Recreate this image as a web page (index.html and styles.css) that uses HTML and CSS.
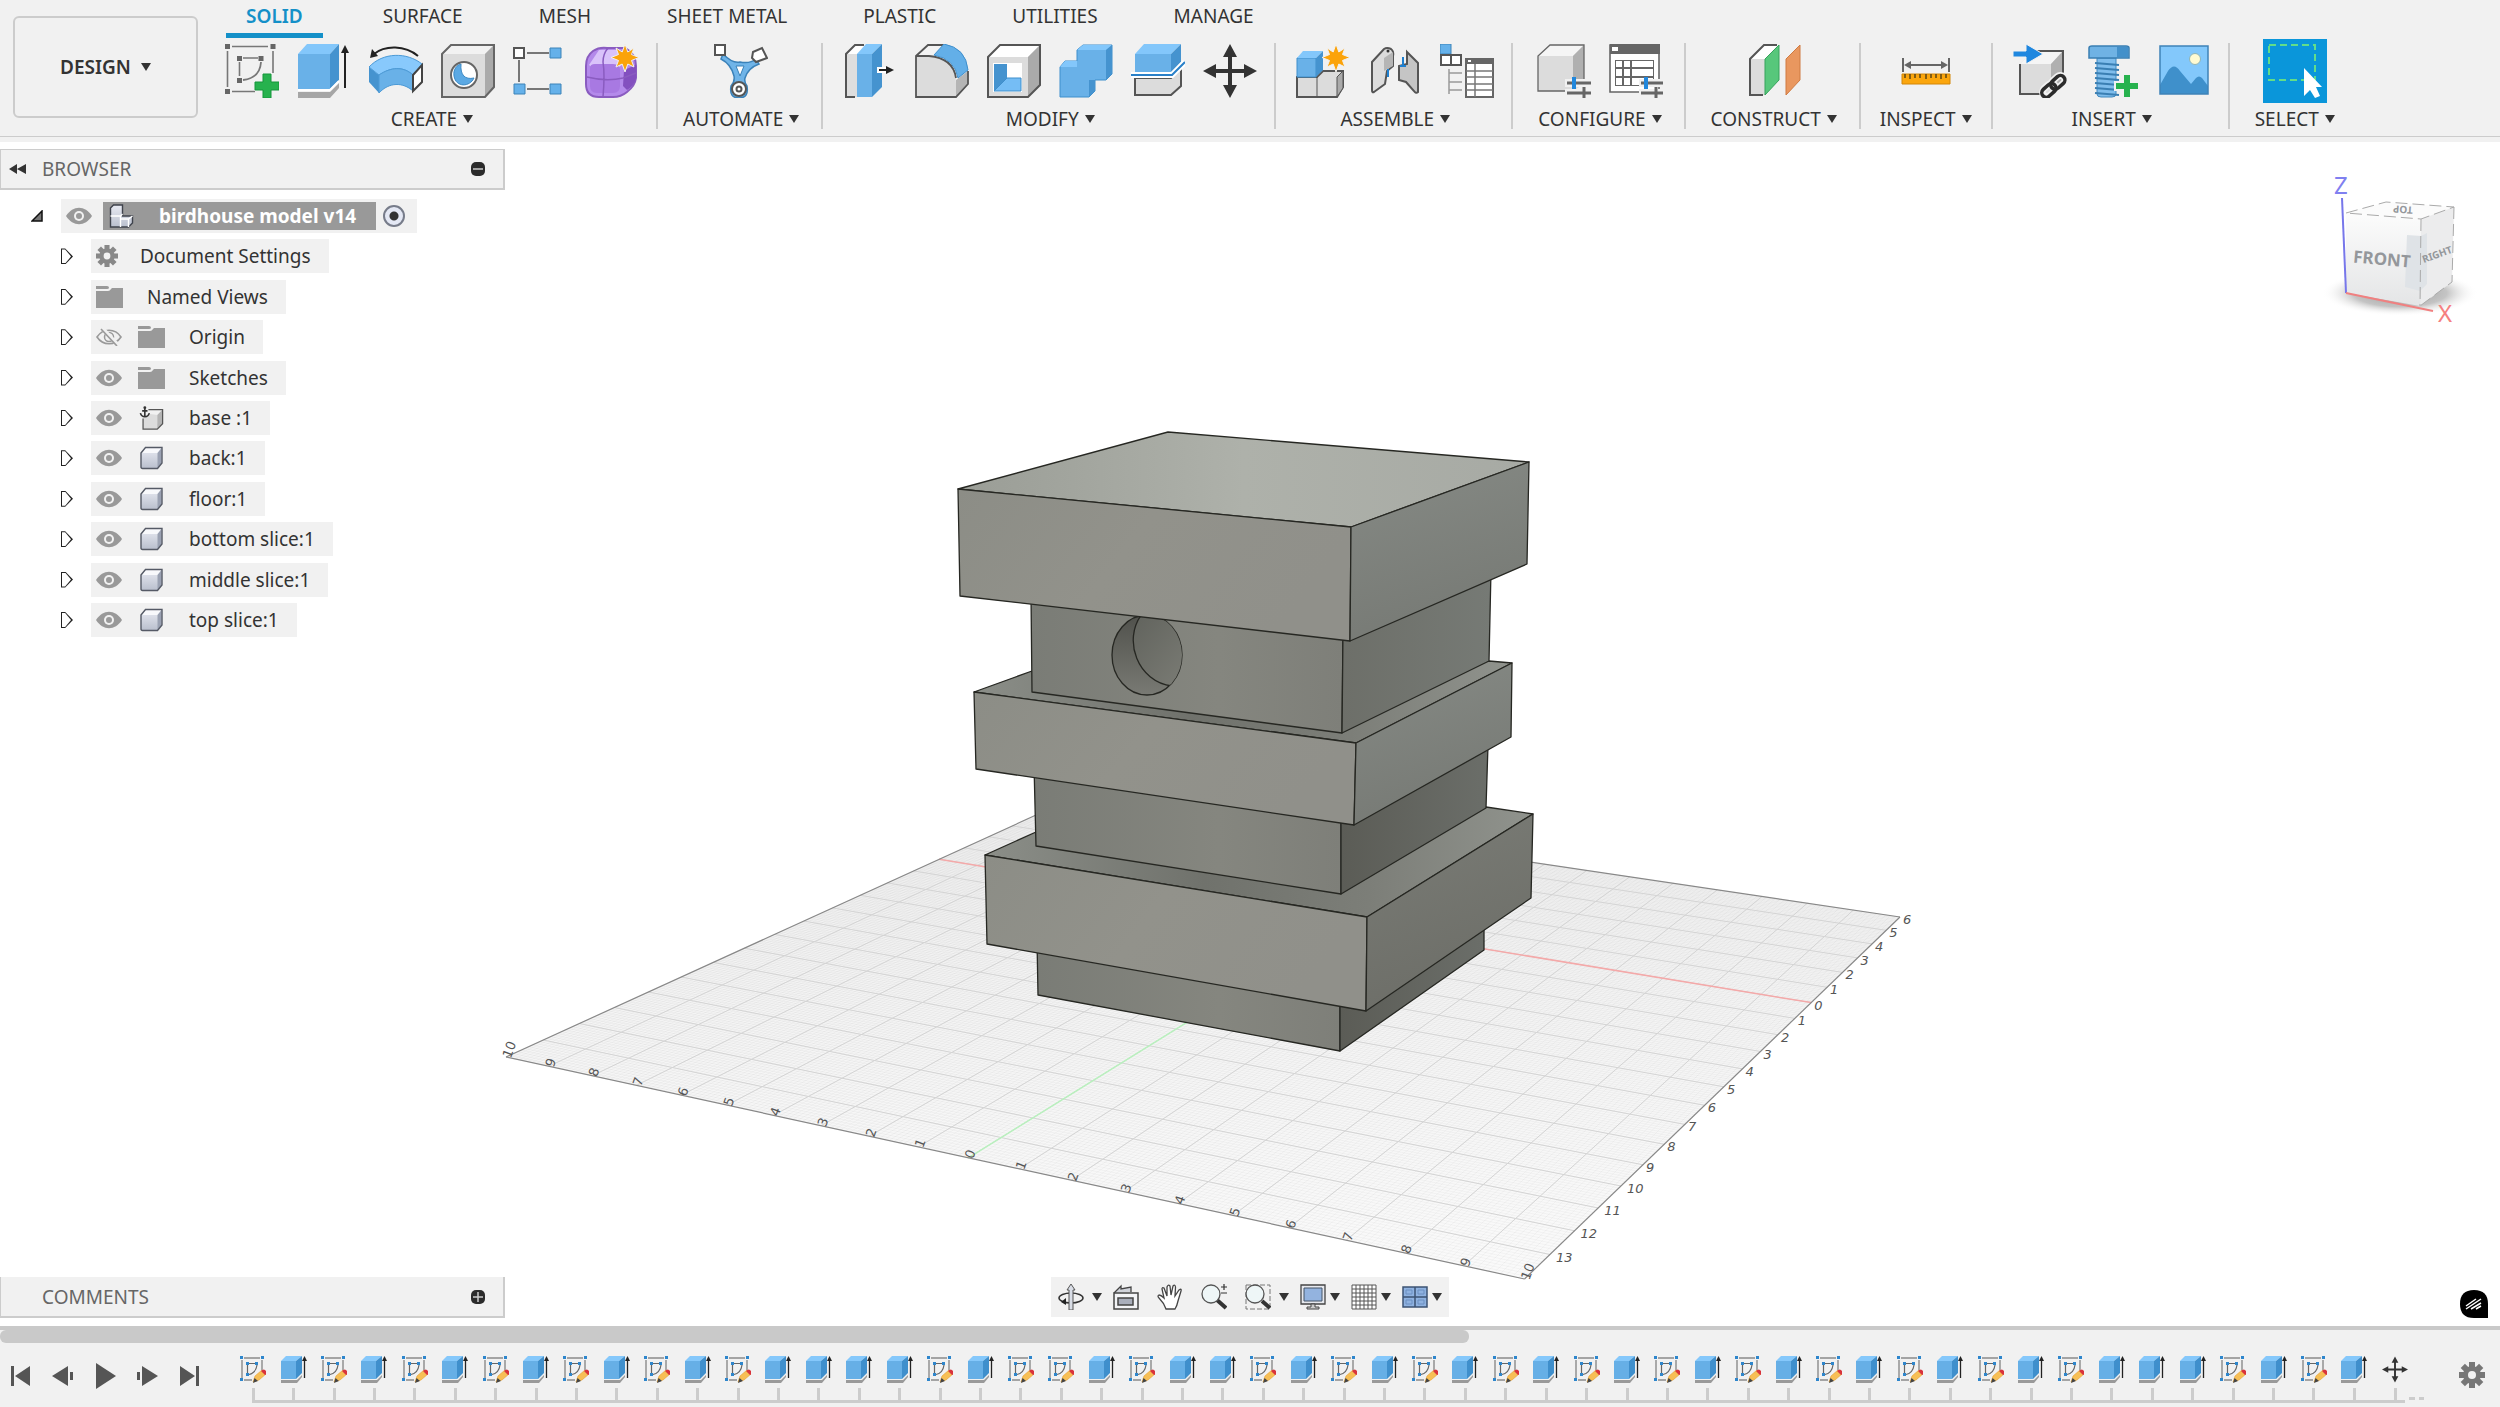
FILE: index.html
```html
<!DOCTYPE html>
<html lang="en">

<head>
    <meta charset="UTF-8">
    <meta name="viewport" content="width=device-width, initial-scale=1.0">
    <link rel="stylesheet" href="styles.css">
    <title>birdhouse model v14</title>
</head>

<body>

    <!-- shared icons -->
    <svg class="sprite" aria-hidden="true">
        <defs>
            <linearGradient id="bodyFill" x1="0" y1="0" x2="0" y2="1">
                <stop offset="0" stop-color="#e9ebf3" />
                <stop offset="1" stop-color="#b9bfcd" />
            </linearGradient>
        </defs>
        <symbol id="eye" viewBox="0 0 26 18">
            <path d="M0 9C7-2 19-2 26 9C19 20 7 20 0 9z" fill="#999" />
            <circle cx="13" cy="9" r="5" fill="#f1f1f1" />
            <circle cx="13" cy="9" r="3" fill="#999" />
        </symbol>
        <symbol id="eyeOff" viewBox="0 0 26 18">
            <path d="M1 9C7 0 19 0 25 9C19 18 7 18 1 9z" fill="none" stroke="#999" stroke-width="1.6" />
            <circle cx="13" cy="9" r="4.5" fill="none" stroke="#999" stroke-width="1.5" />
            <path d="M6 0L22 17" stroke="#f1f1f1" stroke-width="4" />
            <path d="M5 1L21 18" stroke="#999" stroke-width="1.6" />
        </symbol>
        <symbol id="folder" viewBox="0 0 27 22">
            <path d="M0 0h11q2 0 2 1.500t-2 1.500H0z" fill="#999" />
            <path d="M0 5h12q2 0 3-2l1-1h11v20H0z" fill="#999" />
        </symbol>
        <symbol id="gear" viewBox="0 0 26 26">
            <g fill="currentColor">
                <rect x="10" y="0" width="6" height="26" />
                <rect x="10" y="0" width="6" height="26" transform="rotate(45 13 13)" />
                <rect x="10" y="0" width="6" height="26" transform="rotate(90 13 13)" />
                <rect x="10" y="0" width="6" height="26" transform="rotate(135 13 13)" />
                <circle cx="13" cy="13" r="9" />
            </g>
            <circle cx="13" cy="13" r="4" fill="#f1f1f1" />
        </symbol>
        <symbol id="body" viewBox="0 0 24 24">
            <path d="M1.500 7L6 1.500H22.500V17L18 22.500H3Q1.500 22.500 1.500 21z" fill="url(#bodyFill)" />
            <path d="M2 7L6 2H22L18 7z" fill="#f8f9fc" />
            <path d="M18 7L22 2V17L18 22z" fill="#9aa1b2" />
            <path d="M1.500 7L6 1.500H22.500V17L18 22.500H3Q1.500 22.500 1.500 21z" fill="none" stroke="#555a66" stroke-width="1.400" />
        </symbol>
        <symbol id="anchored" viewBox="0 0 27 27">
            <path d="M4 14V26H20V10L12 9z" fill="#dcdcdc" />
            <path d="M20 10L26 4V20L20 26z" fill="#b4b4b4" />
            <path d="M10 4H26V20L20 26H4V14" fill="none" stroke="#555" stroke-width="1.400" />
            <path d="M6 3V12M3 5.500H9M1 8Q2 12 6 12Q10 12 11 8" fill="none" stroke="#333" stroke-width="1.800" />
            <circle cx="6" cy="2" r="1.600" fill="#333" />
        </symbol>
        <symbol id="component" viewBox="0 0 24 24">
            <path d="M1 4L4 1H13V12H23V19L19 23H1z" fill="url(#bodyFill)" stroke="#3f434c" stroke-width="1.400" />
            <path d="M1 12H11M11 23V12L13 10M19 23V15H11M19 15L23 12" fill="none" stroke="#fff" stroke-width="1.400" />
        </symbol>
        <symbol id="sketchStep" viewBox="0 0 26 27">
            <path d="M2 4V22M4 2H20M22 4V14M4 24H12" stroke="#8b8b8b" stroke-width="1.400" fill="none" />
            <path d="M7.500 9V17M9 7.500H15M17 9Q16 17 9 18.500" stroke="#666" stroke-width="1.200" fill="none" />
            <path d="M0 0h3v3h-3zM21 0h3v3h-3zM0 22h3v3h-3zM6 6h3v3h-3zM15 6h3v3h-3zM6 17h3v3h-3z" fill="#2e86cc" />
            <path d="M13 26L15 20L22 14L26 18L19 24z" fill="#f7bf55" stroke="#e5a030" stroke-width=".6" />
            <path d="M13 27L14.500 22L18 25z" fill="#444" />
            <path d="M21 15Q24 12 26 15T25 19z" fill="#d8333c" />
        </symbol>
        <symbol id="extrudeStep" viewBox="0 0 26 27">
            <path d="M0 24L16 24L21 19V21L16 27H0z" fill="#9a9a9a" />
            <path d="M0 5H15V23H0z" fill="#66afe6" />
            <path d="M0 5L5 0H21L15 5z" fill="#85c8fb" />
            <path d="M15 5L21 0V17L15 23z" fill="#3f8fcc" />
            <path d="M23.500 4V22" stroke="#222" stroke-width="1.300" />
            <path d="M23.500 0L26 5H21z" fill="#222" />
        </symbol>
        <symbol id="move" viewBox="0 0 54 54">
            <path d="M27 8V46M8 27H46" stroke="#333" stroke-width="4" />
            <path d="M27 0L34 13H20zM27 54L34 41H20zM0 27L13 20V34zM54 27L41 20V34z" fill="#333" />
        </symbol>
        <symbol id="star" viewBox="0 0 28 28">
            <path d="M14 0L16.800 8L23 4L20.500 10.500L28 13.500L20.500 16.500L23 23L16.800 20L14 28L11.200 20L5 23L7.500 16.500L0 13.500L7.500 10.500L5 4L11.200 8z" fill="#fba30a" stroke="#f1f1f1" stroke-width="1" />
        </symbol>
    </svg>

    <header class="toolbar">
        <button class="workspaceBtn">DESIGN <i class="caret"></i></button>
        <div class="ribbon">
            <nav class="tabs">
                <button class="active">SOLID</button>
                <button>SURFACE</button>
                <button>MESH</button>
                <button>SHEET METAL</button>
                <button>PLASTIC</button>
                <button>UTILITIES</button>
                <button>MANAGE</button>
            </nav>
            <div class="groups">
                <div class="group">
                    <div class="tools">
                        <button aria-label="Create Sketch">
                            <svg viewBox="0 0 54 54">
                                <path d="M2.500 7V43M7 2.500H43M48 7V29M7 47.500H30M14.500 18V32M18 14H33" stroke="#777" stroke-width="1.600" fill="none" />
                                <path d="M36 18Q35 34 18 36" stroke="#777" stroke-width="1.800" fill="none" />
                                <path d="M0 0h5v5h-5zM45.500 0h5v5h-5zM0 45h5v5h-5zM12 12h5v5h-5zM33.500 12h5v5h-5zM12 34h5v5h-5z" fill="#666" />
                                <path d="M38 30h8v8h8v8h-8v8h-8v-8h-8v-8h8z" fill="#27b24e" stroke="#15963b" />
                            </svg>
                        </button>
                        <button aria-label="Extrude">
                            <svg viewBox="0 0 54 54">
                                <path d="M1 48H33L42 39V44L33 54H1z" fill="#a6a6a6" />
                                <path d="M1 10H33V45H1z" fill="#69b1e8" />
                                <path d="M1 10L10 0H42L33 10z" fill="#83c7fb" />
                                <path d="M33 10L42 0V36L33 45z" fill="#4593cf" />
                                <path d="M1 46H33L42 37" stroke="#fff" stroke-width="2" fill="none" />
                                <path d="M48 6V44" stroke="#222" stroke-width="2" />
                                <path d="M48 1L52 9H44z" fill="#222" />
                            </svg>
                        </button>
                        <button aria-label="Revolve">
                            <svg viewBox="0 0 54 54">
                                <path d="M0 23L10 31V49L0 38z" fill="#4593cf" />
                                <path d="M0 23C14 8 38 8 53 20L44 31C34 22 22 23 10 31z" fill="#88c9fc" stroke="#4c9ad6" />
                                <path d="M10 31C22 23 34 22 44 31V47C34 38 20 38 10 49z" fill="#69b1e8" stroke="#4c9ad6" />
                                <path d="M44 31L53 21V38L44 47z" fill="#fff" stroke="#444" stroke-width="2" />
                                <path d="M49 12C36 1 16 1 5 10" fill="none" stroke="#222" stroke-width="2" />
                                <path d="M1 14L3 5L9 12z" fill="#222" />
                            </svg>
                        </button>
                        <button aria-label="Hole">
                            <svg viewBox="0 0 54 54">
                                <path d="M1 10L10 1H53V43L44 53H1z" fill="#dcdcdc" />
                                <path d="M1 10L10 1H53L44 10z" fill="#f2f2f2" />
                                <path d="M44 10L53 1V43L44 53z" fill="#aaa" />
                                <path d="M1 10L10 1H53V43L44 53H1z" fill="none" stroke="#666" stroke-width="2" />
                                <circle cx="23" cy="31" r="13" fill="#fff" stroke="#666" stroke-width="2" />
                                <path d="M20 20C19 31 24 36 33 34C29 43 15 44 13 32C12 25 16 21 20 20z" fill="#5ba9e4" stroke="#3a88c4" />
                            </svg>
                        </button>
                        <button aria-label="Rectangular Pattern">
                            <svg viewBox="0 0 54 54">
                                <path d="M14 9H36M6 16V38M14 45H36" stroke="#777" stroke-width="2" />
                                <path d="M1 4h10v10h-10z" fill="#fff" stroke="#555" stroke-width="2" />
                                <path d="M37 4h11v10h-11zM1 40h11v10h-11zM37 40h11v10h-11z" fill="#65b1ea" stroke="#3c83b8" />
                            </svg>
                        </button>
                        <button aria-label="Create Form">
                            <svg viewBox="0 0 54 54">
                                <path d="M1 22Q1 12 8 7Q14 3 22 4H40Q51 10 51 22V34Q50 42 42 48Q36 53 28 53H14Q1 53 1 40z" fill="#b48aeb" stroke="#8a5cc0" stroke-width="2" />
                                <path d="M4 21L14 6H32L38 20L33 24H8z" fill="#d9c2fa" />
                                <path d="M5 24Q5 20 10 20H28Q35 20 35 26V42Q35 49 28 49H12Q5 49 5 42z" fill="#a879e2" />
                                <path d="M39 26L51 21V34Q49 42 42 46L38 42z" fill="#8350bf" />
                                <path d="M18 53Q20 30 18 18Q18 10 23 4M2 33Q22 38 38 34L51 29" stroke="#8a5cc0" fill="none" stroke-width="1.500" />
                                <use href="#star" x="26" y="0" width="28" height="28" />
                            </svg>
                        </button>
                    </div>
                    <button class="menu">CREATE <i class="caret"></i></button>
                </div>
                <div class="group">
                    <div class="tools">
                        <button aria-label="Automated Modeling">
                            <svg viewBox="0 0 54 54">
                                <path d="M9 10Q19 20 26 18Q36 20 42 15L45 20Q34 24 31 34Q30 38 33 42Q35 54 25 54Q15 54 17 42Q21 38 20 32Q17 20 7 15z" fill="#6fb4e8" stroke="#3b82b9" stroke-width="1.500" />
                                <path d="M22 22H30L26 32z" fill="#fff" stroke="#3b82b9" />
                                <path d="M1 1h10v10h-10z" fill="#fff" stroke="#555" stroke-width="2" />
                                <path d="M39 8L48 4L53 14L42 18L38 14z" fill="#fff" stroke="#555" stroke-width="2" />
                                <circle cx="25" cy="45" r="7" fill="#fff" stroke="#555" stroke-width="2" />
                                <circle cx="25" cy="45" r="2.500" fill="#fff" stroke="#555" stroke-width="2" />
                            </svg>
                        </button>
                    </div>
                    <button class="menu">AUTOMATE <i class="caret"></i></button>
                </div>
                <div class="group">
                    <div class="tools">
                        <button aria-label="Press Pull">
                            <svg viewBox="0 0 54 54">
                                <path d="M3 10L12 1H22L14 10V53H3z" fill="#dedede" />
                                <path d="M3 10L12 1H22L14 10z" fill="#fff" />
                                <path d="M21 1H12L3 10V53H12" fill="none" stroke="#555" stroke-width="2" />
                                <path d="M14 10H29V53H14z" fill="#69b1e8" />
                                <path d="M14 10L23 0H39L29 10z" fill="#83c7fb" />
                                <path d="M29 10L39 0V43L29 53z" fill="#4593cf" />
                                <path d="M34 26H46" stroke="#fff" stroke-width="6" />
                                <path d="M36 26H44" stroke="#222" stroke-width="2" />
                                <path d="M51 26L43 22V30z" fill="#222" />
                            </svg>
                        </button>
                        <button aria-label="Fillet">
                            <svg viewBox="0 0 54 54">
                                <path d="M1 12L13 1H30L53 25V40L41 53H1z" fill="#f3f3f3" />
                                <path d="M1 12H14Q41 14 41 40V53H1z" fill="#dcdcdc" />
                                <path d="M41 36L53 27V40L41 53z" fill="#b5b5b5" />
                                <path d="M28 1H13L1 12V53H41L53 40V27M1 12H14Q38 14 41 34" fill="none" stroke="#555" stroke-width="1.800" />
                                <path d="M19 11L29 0Q51 4 53 26L43 34Q40 15 19 11z" fill="#63afe8" stroke="#3f8fcc" />
                            </svg>
                        </button>
                        <button aria-label="Shell">
                            <svg viewBox="0 0 54 54">
                                <path d="M1 13L13 1H53V41L41 53H1z" fill="#dcdcdc" />
                                <path d="M1 13L13 1H53L41 13z" fill="#fff" />
                                <path d="M41 13L53 1V41L41 53z" fill="#aaa" />
                                <path d="M1 13L13 1H53V41L41 53H1z" fill="none" stroke="#555" stroke-width="2" />
                                <path d="M6 19H35V48H6z" fill="#fff" />
                                <path d="M7 20H20V35L7 47z" fill="#4593cf" />
                                <path d="M7 47L20 34H34V47z" fill="#75bdf5" stroke="#3f8fcc" />
                            </svg>
                        </button>
                        <button aria-label="Combine">
                            <svg viewBox="0 0 54 54">
                                <path d="M1 23L6 17H18V6L24 1H53V30L47 36H36V47L30 53H1z" fill="#69b1e8" stroke="#3f8fcc" />
                                <path d="M18 6L24 1H53L47 6zM1 23L6 17H18V23z" fill="#83c7fb" />
                                <path d="M47 6L53 1V30L47 36zM30 36H36V47L30 53z" fill="#4593cf" />
                            </svg>
                        </button>
                        <button aria-label="Split Body">
                            <svg viewBox="0 0 54 54">
                                <path d="M4 34H40L50 24V42L40 51H4z" fill="#dcdcdc" stroke="#555" stroke-width="2" />
                                <path d="M4 10H40V29H4z" fill="#69b1e8" />
                                <path d="M4 10L13 0H50L40 10z" fill="#83c7fb" />
                                <path d="M40 10L50 0V18L40 29z" fill="#4593cf" />
                                <path d="M0 31H41L54 18" stroke="#fff" stroke-width="6" fill="none" />
                                <path d="M0 31H41L54 18" stroke="#2980c8" stroke-width="2" fill="none" />
                            </svg>
                        </button>
                        <button aria-label="Move/Copy"><svg><use href="#move" /></svg></button>
                    </div>
                    <button class="menu">MODIFY <i class="caret"></i></button>
                </div>
                <div class="group">
                    <div class="tools">
                        <button aria-label="New Component">
                            <svg viewBox="0 0 54 54">
                                <path d="M1 33H21L27 27H47V43L41 53H1z" fill="#dcdcdc" stroke="#555" stroke-width="2" />
                                <path d="M41 33L47 27V44L41 53zM21 33V53" fill="#aaa" stroke="#555" />
                                <path d="M1 14H20V33H1z" fill="#69b1e8" stroke="#3f8fcc" />
                                <path d="M1 14L7 7H27L20 14z" fill="#83c7fb" />
                                <path d="M20 14L27 7V26L20 33z" fill="#4593cf" />
                                <use href="#star" x="26" y="0" width="28" height="28" />
                            </svg>
                        </button>
                        <button aria-label="Joint">
                            <svg viewBox="0 0 54 54">
                                <path d="M4 18L16 5Q19 3 23 5Q26 7 25 12V22L19 27L17 40L6 48Q4 49 4 46z" fill="#dcdcdc" stroke="#555" stroke-width="2" />
                                <path d="M16 14L25 8V22L16 27z" fill="#b5b5b5" />
                                <path d="M39 8L50 19V48Q48 50 46 47L38 38L31 36V22L39 20z" fill="#c5c5c5" stroke="#555" stroke-width="2" />
                                <circle cx="20" cy="7" r="1.500" fill="#333" />
                                <path d="M20 25V33M35 13V22M32 22H38" stroke="#1f80d0" stroke-width="2" />
                            </svg>
                        </button>
                        <button aria-label="Bill of Materials">
                            <svg viewBox="0 0 54 54">
                                <path d="M0 0h11v10h-11z" fill="#65b1ea" stroke="#3c83b8" />
                                <path d="M1 11h20v10h-20zM11 11v10" fill="#fff" stroke="#555" stroke-width="2" />
                                <path d="M9 25V50M9 29H22M9 38H22M9 46H22" stroke="#999" stroke-width="1.500" />
                                <path d="M26 15h27v38h-27z" fill="#fff" stroke="#666" stroke-width="2" />
                                <path d="M26 14h28v6h-28z" fill="#666" />
                                <path d="M26 27H53M26 33H53M26 40H53M26 46H53M35 20V53" stroke="#777" stroke-width="1.500" />
                                <path d="M28 16h3v2h-3z" fill="#fff" />
                            </svg>
                        </button>
                    </div>
                    <button class="menu">ASSEMBLE <i class="caret"></i></button>
                </div>
                <div class="group">
                    <div class="tools">
                        <button aria-label="Configure Design">
                            <svg viewBox="0 0 54 54">
                                <path d="M1 12L13 1H47V40L36 47H1z" fill="#dcdcdc" />
                                <path d="M1 12L13 1H47L36 12z" fill="#f5f5f5" />
                                <path d="M36 12L47 1V40H36z" fill="#b0b0b0" />
                                <path d="M30 47H1V12L13 1H47V36" fill="none" stroke="#666" stroke-width="1.300" />
                                <path d="M28 39H54M28 49H54" stroke="#f1f1f1" stroke-width="8" />
                                <path d="M30 39H54M30 49H54M47 43V54" stroke="#666" stroke-width="3" />
                                <path d="M37 33V45" stroke="#2187dc" stroke-width="4" />
                            </svg>
                        </button>
                        <button aria-label="Configuration Table">
                            <svg viewBox="0 0 54 54">
                                <path d="M1 1h49v47h-49z" fill="#fff" stroke="#666" stroke-width="1.600" />
                                <path d="M1 0h50v10h-50zM6 16h39v26h-39z" fill="#666" />
                                <path d="M7 17h6v6h-6zM15 17h6v6h-6zM23 17h21v6h-21zM7 25h6v7h-6zM15 25h6v7h-6zM23 25h21v7h-21zM7 34h6v7h-6zM15 34h6v7h-6zM23 34h21v7h-21zM3 3h6v4h-6z" fill="#fff" />
                                <path d="M30 39H54M30 49H54" stroke="#f1f1f1" stroke-width="8" />
                                <path d="M32 39H54M32 49H54M47 43V54" stroke="#666" stroke-width="3" />
                                <path d="M37 33V45" stroke="#2187dc" stroke-width="4" />
                            </svg>
                        </button>
                    </div>
                    <button class="menu">CONFIGURE <i class="caret"></i></button>
                </div>
                <div class="group">
                    <div class="tools">
                        <button aria-label="Offset Plane">
                            <svg viewBox="0 0 54 54">
                                <path d="M3 15L17 1H31L18 15V51H3z" fill="#dcdcdc" />
                                <path d="M3 15L17 1H31L18 15z" fill="#fff" />
                                <path d="M30 1H17L3 15V51H16" fill="none" stroke="#555" stroke-width="2" />
                                <path d="M18 15L32 1V36L18 51z" fill="#57c77b" stroke="#36a35c" />
                                <path d="M39 15L53 1V36L39 51z" fill="#e9975f" stroke="#cf7b42" />
                            </svg>
                        </button>
                    </div>
                    <button class="menu">CONSTRUCT <i class="caret"></i></button>
                </div>
                <div class="group narrow">
                    <div class="tools">
                        <button aria-label="Measure">
                            <svg viewBox="0 0 54 54">
                                <path d="M4 14V28M50 14V28M8 21H46" stroke="#666" stroke-width="2" />
                                <path d="M5 21L12 17V25zM49 21L42 17V25z" fill="#666" />
                                <path d="M3 30h48v10h-48z" fill="#fba60d" stroke="#d28608" />
                                <path d="M6 30v4M11 30v5M16 30v4M21 30v4M27 30v5M32 30v4M37 30v4M42 30v5M47 30v4" stroke="#5b4516" stroke-width="1.500" />
                            </svg>
                        </button>
                    </div>
                    <button class="menu">INSPECT <i class="caret"></i></button>
                </div>
                <div class="group">
                    <div class="tools">
                        <button aria-label="Insert Derive">
                            <svg viewBox="0 0 54 54">
                                <path d="M7 20L20 7H50V38L38 50H7z" fill="#dcdcdc" />
                                <path d="M7 20L20 7H50L38 20z" fill="#f5f5f5" />
                                <path d="M38 20L50 7V38L38 50z" fill="#b0b0b0" />
                                <path d="M22 7H50V32M7 20V50H28" fill="none" stroke="#555" stroke-width="2" />
                                <path d="M0 7H13V0L30 10L13 20V13H0z" fill="#1f87df" stroke="#f1f1f1" />
                                <g fill="none" transform="rotate(-42 40 42)">
                                    <rect x="27" y="38" width="15" height="9" rx="4.500" stroke="#f1f1f1" stroke-width="7" />
                                    <rect x="39" y="38" width="15" height="9" rx="4.500" stroke="#f1f1f1" stroke-width="7" />
                                    <rect x="26" y="38" width="16" height="9" rx="4.500" stroke="#2c2c2c" stroke-width="3.500" />
                                    <rect x="38" y="38" width="16" height="9" rx="4.500" stroke="#2c2c2c" stroke-width="3.500" />
                                </g>
                            </svg>
                        </button>
                        <button aria-label="Insert Fastener">
                            <svg viewBox="0 0 54 54">
                                <path d="M12 14H31V50Q31 53 27 53H16Q12 53 12 50z" fill="#7fbdec" stroke="#4088be" />
                                <path d="M4 4Q4 2 7 2H41Q44 2 44 4V14H4z" fill="#6fb2e4" stroke="#3a7fb3" stroke-width="1.500" />
                                <path d="M32 3H43V13H32z" fill="#4390ca" />
                                <path d="M10 19L34 21M10 24L34 26M10 29L34 31M10 34L34 36M10 39L34 41M10 44L34 46M10 49L34 51" stroke="#3a7fb3" stroke-width="1.800" />
                                <path d="M38 30h8v8h8v8h-8v8h-8v-8h-8v-8h8z" fill="#27b24e" stroke="#f1f1f1" stroke-width="2" />
                            </svg>
                        </button>
                        <button aria-label="Canvas">
                            <svg viewBox="0 0 54 54">
                                <path d="M3 2h48v48h-48z" fill="#83c8fb" />
                                <path d="M3 41L11 27Q17 18 23 27L34 40L39 34Q42 31 45 34L51 42V50H3z" fill="#3f90cb" />
                                <path d="M3 2h48v48h-48z" fill="none" stroke="#3f83b8" stroke-width="1.500" />
                                <circle cx="38" cy="15" r="5.500" fill="#fffbd2" stroke="#8fb5b8" />
                            </svg>
                        </button>
                    </div>
                    <button class="menu">INSERT <i class="caret"></i></button>
                </div>
                <div class="group">
                    <div class="tools">
                        <button class="selected" aria-label="Select">
                            <svg viewBox="0 0 54 54">
                                <rect x="1" y="1" width="46" height="35" fill="none" stroke="#62dd88" stroke-width="2" stroke-dasharray="7 4" />
                                <path d="M36 24V52L42 46L47 54L52 52L48 43H54z" fill="#fff" />
                            </svg>
                        </button>
                    </div>
                    <button class="menu">SELECT <i class="caret"></i></button>
                </div>
            </div>
        </div>
    </header>

    <main class="workspace">
        <svg class="scene" viewBox="0 142 2500 1184" preserveAspectRatio="xMidYMid meet" role="img" aria-label="Birdhouse model">
            <defs>
                <linearGradient id="floorFill" x1="0" y1="0" x2="0" y2="1">
                    <stop offset="0" stop-color="#efefef" />
                    <stop offset="1" stop-color="#fafafa" />
                </linearGradient>
                <linearGradient id="topFill" x1="0" y1="0" x2="1" y2="0">
                    <stop offset="0" stop-color="#9a9d96" />
                    <stop offset=".5" stop-color="#aeb1aa" />
                    <stop offset="1" stop-color="#a7aaa4" />
                </linearGradient>
                <linearGradient id="frontFill" x1="0" y1="0" x2="1" y2="0.300">
                    <stop offset="0" stop-color="#8c8d86" />
                    <stop offset=".5" stop-color="#92928b" />
                    <stop offset="1" stop-color="#90908a" />
                </linearGradient>
                <linearGradient id="sideFill" x1="0" y1="0" x2="0.300" y2="1">
                    <stop offset="0" stop-color="#868a85" />
                    <stop offset="1" stop-color="#777a75" />
                </linearGradient>
                <linearGradient id="sideLow" x1="0" y1="0" x2="0.300" y2="1">
                    <stop offset="0" stop-color="#7a7c76" />
                    <stop offset="1" stop-color="#6d6e68" />
                </linearGradient>
                <linearGradient id="neckFront" x1="0" y1="0" x2="1" y2="0">
                    <stop offset="0" stop-color="#7a7c76" />
                    <stop offset=".6" stop-color="#85867f" />
                    <stop offset="1" stop-color="#7e7f79" />
                </linearGradient>
                <linearGradient id="neckSide" x1="0" y1="0" x2="1" y2="0">
                    <stop offset="0" stop-color="#6d6f69" />
                    <stop offset="1" stop-color="#767a75" />
                </linearGradient>
                <linearGradient id="neckDark" x1="0" y1="0" x2="1" y2="0">
                    <stop offset="0" stop-color="#5b5c56" />
                    <stop offset="1" stop-color="#6b6e69" />
                </linearGradient>
                <linearGradient id="ledge" x1="0" y1="0" x2="1" y2="0">
                    <stop offset="0" stop-color="#8b8e88" />
                    <stop offset=".4" stop-color="#70726c" />
                    <stop offset=".7" stop-color="#7c7e78" />
                    <stop offset="1" stop-color="#90938d" />
                </linearGradient>
                <linearGradient id="holeSide" x1="0" y1="0" x2="0" y2="1">
                    <stop offset="0" stop-color="#50514c" />
                    <stop offset="1" stop-color="#797a74" />
                </linearGradient>
                <linearGradient id="holeFill" x1="0" y1="0" x2="1" y2="1">
                    <stop offset="0" stop-color="#60625c" />
                    <stop offset="1" stop-color="#7d7e77" />
                </linearGradient>
                <clipPath id="opening">
                    <ellipse cx="1147" cy="655" rx="35" ry="40" />
                </clipPath>
            </defs>
            <g id="floor"></g>
            <g class="model">
                <!-- base -->
                <path fill="url(#neckFront)" d="M1037 940L1038 995L1340 1051V990z" />
                <path fill="url(#neckDark)" d="M1340 990V1051L1484 950V925z" />
                <!-- bottom slice -->
                <path fill="url(#ledge)" d="M985 855L1036 832L1486 807L1533 814L1367 917z" />
                <path fill="url(#frontFill)" d="M985 855L1367 917L1366 1011L987 944z" />
                <path fill="url(#sideLow)" d="M1367 917L1533 814L1531 898L1366 1011z" />
                <path fill="url(#neckFront)" d="M1034 765L1036 846L1341 894V810z" />
                <path fill="url(#neckDark)" d="M1341 810V894L1486 808L1488 745z" />
                <!-- middle slice -->
                <path fill="url(#ledge)" d="M974 692L1032 671L1489 661L1512 663L1356 743z" />
                <path fill="url(#frontFill)" d="M974 692L1356 743L1354 825L976 769z" />
                <path fill="url(#sideFill)" d="M1356 743L1512 663L1511 737L1354 825z" />
                <path fill="url(#neckFront)" d="M1031 595L1032 692L1342 733L1343 630z" />
                <path fill="url(#neckSide)" d="M1343 630L1342 733L1489 661L1491 570z" />
                <!-- entrance hole -->
                <ellipse cx="1147" cy="655" rx="35" ry="40" fill="url(#holeSide)" />
                <path clip-path="url(#opening)" fill="url(#holeFill)" d="M1142 614C1122 640 1138 682 1172 686L1195 670L1190 610z" />
                <!-- roof -->
                <path fill="url(#topFill)" d="M958 489L1168 432L1529 462L1351 527z" />
                <path fill="url(#frontFill)" d="M958 489L1351 527L1350 641L960 596z" />
                <path fill="url(#sideFill)" d="M1351 527L1529 462L1527 564L1350 641z" />
            </g>
        </svg>

        <svg class="viewCube" viewBox="2300 150 200 190" role="img" aria-label="View cube">
            <defs>
                <radialGradient id="cubeShadow">
                    <stop offset="0" stop-color="#999" />
                    <stop offset=".6" stop-color="#c4c4c4" />
                    <stop offset="1" stop-color="#fff" stop-opacity="0" />
                </radialGradient>
                <linearGradient id="cubeFront" x1="0" y1="0" x2="0" y2="1">
                    <stop offset="0" stop-color="#fcfcfc" />
                    <stop offset="1" stop-color="#e4e5e6" />
                </linearGradient>
            </defs>
            <ellipse cx="2400" cy="293" rx="78" ry="23" fill="url(#cubeShadow)" />
            <path d="M2346 213L2386 202L2454 207L2421 219z" fill="#fbfbfb" />
            <path d="M2346 213L2421 219L2420 306L2346 293z" fill="url(#cubeFront)" />
            <path d="M2421 219L2454 207L2452 282L2420 306z" fill="#ececed" />
            <path d="M2407 235L2421 236L2427 233V284L2420 291L2405 287z" fill="#dfe3e7" />
            <path d="M2346 213L2386 202L2454 207L2421 219zM2421 219L2420 306M2454 207L2452 282L2420 306" fill="none" stroke="#aaa" stroke-dasharray="12 5" />
            <path d="M2342 198L2346 293" stroke="#7777ea" stroke-width="2" />
            <path d="M2346 293L2433 311" stroke="#f08080" stroke-width="2" />
            <text x="2334" y="194" class="axisZ">Z</text>
            <text x="2438" y="322" class="axisX">X</text>
            <text x="2382" y="265" text-anchor="middle" class="face" transform="rotate(5 2382 258)">FRONT</text>
            <text x="2437" y="258" text-anchor="middle" class="faceSide" transform="rotate(-20 2437 254)">RIGHT</text>
            <text x="2403" y="212" text-anchor="middle" class="faceTop" transform="rotate(184 2403 209)">TOP</text>
        </svg>

        <aside class="browser">
            <div class="panelHead">
                <svg class="rewind" viewBox="0 0 17 10"><path d="M8 0V10L0 5zM17 0V10L8 5z" fill="#333" /></svg>
                <h2>BROWSER</h2>
                <button class="dot" aria-label="Collapse">
                    <svg viewBox="0 0 14 14"><rect width="14" height="14" rx="5" fill="#2b2b2b" /><path d="M2 7H12" stroke="#ccc" stroke-width="1.500" /></svg>
                </button>
            </div>
            <ul class="tree">
                <li class="root">
                    <button class="twist open" aria-label="Collapse">
                        <svg viewBox="0 0 12 12"><path d="M1 11H11V1z" fill="#777" stroke="#111" stroke-width="1.500" /></svg>
                    </button>
                    <div class="row">
                        <svg class="eye"><use href="#eye" /></svg>
                        <label class="title" for="activate"><svg class="type"><use href="#component" /></svg>birdhouse model v14</label>
                        <input type="radio" id="activate" checked>
                    </div>
                </li>
                <li><button class="twist" aria-label="Expand"></button><div class="row"><svg class="type gear"><use href="#gear" /></svg>Document Settings</div></li>
                <li><button class="twist" aria-label="Expand"></button><div class="row"><svg class="type folder"><use href="#folder" /></svg>Named Views</div></li>
                <li><button class="twist" aria-label="Expand"></button><div class="row"><svg class="eye"><use href="#eyeOff" /></svg><svg class="type folder"><use href="#folder" /></svg>Origin</div></li>
                <li><button class="twist" aria-label="Expand"></button><div class="row"><svg class="eye"><use href="#eye" /></svg><svg class="type folder"><use href="#folder" /></svg>Sketches</div></li>
                <li><button class="twist" aria-label="Expand"></button><div class="row"><svg class="eye"><use href="#eye" /></svg><svg class="type"><use href="#anchored" /></svg>base :1</div></li>
                <li><button class="twist" aria-label="Expand"></button><div class="row"><svg class="eye"><use href="#eye" /></svg><svg class="type"><use href="#body" /></svg>back:1</div></li>
                <li><button class="twist" aria-label="Expand"></button><div class="row"><svg class="eye"><use href="#eye" /></svg><svg class="type"><use href="#body" /></svg>floor:1</div></li>
                <li><button class="twist" aria-label="Expand"></button><div class="row"><svg class="eye"><use href="#eye" /></svg><svg class="type"><use href="#body" /></svg>bottom slice:1</div></li>
                <li><button class="twist" aria-label="Expand"></button><div class="row"><svg class="eye"><use href="#eye" /></svg><svg class="type"><use href="#body" /></svg>middle slice:1</div></li>
                <li><button class="twist" aria-label="Expand"></button><div class="row"><svg class="eye"><use href="#eye" /></svg><svg class="type"><use href="#body" /></svg>top slice:1</div></li>
            </ul>
        </aside>

        <div class="bottomBar">
            <div class="panelHead comments">
                <h2>COMMENTS</h2>
                <button class="dot" aria-label="Expand">
                    <svg viewBox="0 0 14 14"><rect width="14" height="14" rx="5" fill="#2b2b2b" /><path d="M2 7H12M7 2V12" stroke="#ccc" stroke-width="1.500" /></svg>
                </button>
            </div>
            <div class="navBar">
                <button class="drop" aria-label="Orbit">
                    <svg viewBox="0 0 26 26">
                        <ellipse cx="13" cy="14" rx="12" ry="5" fill="none" stroke="#333" stroke-width="1.500" />
                        <path d="M13 0L17 6H15V26H11V6H9z" fill="#d9dde6" stroke="#555" />
                        <path d="M3 18L8 14V21z" fill="#222" />
                    </svg><i class="caret"></i>
                </button>
                <button aria-label="Look At">
                    <svg viewBox="0 0 26 26">
                        <path d="M1 9L8 2V5L18 3V8" fill="#d0d3da" stroke="#444" stroke-width="1.300" />
                        <path d="M1 9H25V25H1z" fill="#f3f4f7" stroke="#444" stroke-width="1.500" />
                        <path d="M5 14H20V21H5z" fill="#a9aebb" stroke="#444" stroke-width="1.500" />
                    </svg>
                </button>
                <button aria-label="Pan">
                    <svg viewBox="0 0 26 26">
                        <path d="M9 25Q7 19 2 14Q0 12 2 11Q4 11 7 14L5 5Q5 3 7 4L10 12V3Q11 0 13 2L14 11L16 2Q18 0 18.500 3L18 12L22 6Q25 4 24 7L21 17Q20 22 18 25z" fill="#fff" stroke="#444" stroke-width="1.300" />
                    </svg>
                </button>
                <button aria-label="Zoom">
                    <svg viewBox="0 0 26 26">
                        <path d="M16 16L25 24" stroke="#333" stroke-width="4" />
                        <circle cx="10" cy="10" r="9" fill="#eef6f7" stroke="#555" stroke-width="1.300" />
                        <path d="M20 3H26M23 0V6M20 9H26" stroke="#333" stroke-width="1.200" />
                    </svg>
                </button>
                <button class="drop" aria-label="Fit">
                    <svg viewBox="0 0 26 26">
                        <path d="M1 1H25V25H1z" fill="none" stroke="#777" stroke-dasharray="5 2" />
                        <path d="M17 17L25 24" stroke="#333" stroke-width="4" />
                        <circle cx="10" cy="10" r="9" fill="#eef6f7" stroke="#555" stroke-width="1.300" />
                    </svg><i class="caret"></i>
                </button>
                <button class="drop near" aria-label="Display Settings">
                    <svg viewBox="0 0 26 26">
                        <path d="M1 1H25V20H1z" fill="#e6e8ee" stroke="#444" stroke-width="1.300" />
                        <path d="M4 4H22V17H4z" fill="#93b3df" stroke="#456" />
                        <path d="M11 20H15V23H19V25H7V23H11z" fill="#ccc" stroke="#444" />
                    </svg><i class="caret"></i>
                </button>
                <button class="drop near" aria-label="Grid and Snaps">
                    <svg viewBox="0 0 26 26">
                        <path d="M1 1H25V25H1z" fill="#fff" />
                        <path d="M1 1H25V25H1zM5 1V25M9 1V25M13 1V25M17 1V25M21 1V25M1 5H25M1 9H25M1 13H25M1 17H25M1 21H25" fill="none" stroke="#555" />
                    </svg><i class="caret"></i>
                </button>
                <button class="drop near" aria-label="Viewports">
                    <svg viewBox="0 0 26 26">
                        <path d="M1 3H25V23H1z" fill="#8fb2e0" stroke="#3d5373" stroke-width="1.500" />
                        <path d="M13 3V23M1 13H25" stroke="#3d5373" stroke-width="1.500" />
                        <path d="M4 6H10V10H4zM16 6H22V10H16zM4 16H10V20H4zM16 16H22V20H16z" fill="none" stroke="#6d90c2" />
                    </svg><i class="caret"></i>
                </button>
            </div>
            <button class="assistant" aria-label="Assistant">
                <svg viewBox="0 0 28 28">
                    <path d="M14 0Q28 0 28 14V28H14Q0 28 0 14Q0 0 14 0z" fill="#000" />
                    <path d="M6 16L16 9M6 19L21 9M11 19L21 13M16 19L21 16" stroke="#fff" stroke-width="1.500" />
                </svg>
            </button>
        </div>
    </main>

    <footer class="timeline">
        <div class="scrollTrack"><div class="scrollThumb"></div></div>
        <div class="timelineBody">
            <div class="playback">
                <button aria-label="Go to start"><svg viewBox="0 0 26 26"><path d="M3 3h3v20h-3zM22 3V23L7 13z" fill="#555" /></svg></button>
                <button aria-label="Step back"><svg viewBox="0 0 26 26"><path d="M18 3V23L2 13zM20 9h3v8h-3z" fill="#555" /></svg></button>
                <button aria-label="Play"><svg viewBox="0 0 26 26"><path d="M4 0V26L24 13z" fill="#555" /></svg></button>
                <button aria-label="Step forward"><svg viewBox="0 0 26 26"><path d="M8 3V23L24 13zM3 9h3v8h-3z" fill="#555" /></svg></button>
                <button aria-label="Go to end"><svg viewBox="0 0 26 26"><path d="M20 3h3v20h-3zM4 3V23L19 13z" fill="#555" /></svg></button>
            </div>
            <ol class="steps" id="steps"></ol>
            <button class="settings" aria-label="Timeline settings"><svg><use href="#gear" /></svg></button>
        </div>
    </footer>

    <script src="main.js"></script>
</body>

</html>
```

FILE: styles.css
```css
* {
    margin: 0;
    padding: 0;
    box-sizing: border-box;
    list-style: none;
}

body {
    display: flex;
    flex-direction: column;
    height: 100vh;
    overflow: hidden;
    background-color: #fff;
    color: #333;
    font-family: "Noto Sans", "Open Sans", sans-serif;
    font-size: 19px;
    line-height: 24px;
}

button {
    border: 0;
    background: none;
    color: inherit;
    font: inherit;
    cursor: pointer;
}

svg {
    display: block;
    flex: none;
}

.sprite {
    position: absolute;
    width: 0;
    height: 0;
}

.caret {
    display: inline-block;
    border: 5px solid transparent;
    border-top: 8px solid #333;
    border-bottom: 0;
}

/* toolbar */

.toolbar {
    display: flex;
    height: 142px;
    border-bottom: 5px solid #f1f1f1;
    background-color: #f1f1f1;
    box-shadow: inset 0 -1px #ccc;
    flex: none;
}

.workspaceBtn {
    display: flex;
    align-items: center;
    justify-content: center;
    gap: 10px;
    width: 185px;
    height: 102px;
    margin: 16px 7px 0 13px;
    border: 2px solid #ccc;
    border-radius: 6px;
    font-weight: 600;
}

.tabs {
    display: flex;
    gap: 36px;
    height: 38px;
    padding-left: 21px;
}

.tabs button {
    padding: 0 20px 1px;
    border-bottom: 5px solid transparent;
}

.tabs .active {
    margin-right: 4px;
    border-color: #1490c8;
    color: #1490c8;
    font-weight: 600;
}

.groups {
    display: flex;
    margin-top: 5px;
}

.group {
    display: flex;
    flex-direction: column;
    align-items: center;
    justify-content: space-between;
    height: 86px;
    padding: 1px 17px 0 20px;
    border-right: 2px solid #ccc;
}

.group.narrow {
    padding: 1px 14px 0;
}

.group:last-child {
    border-right: 0;
}

.tools {
    display: flex;
    gap: 18px;
}

.tools svg {
    width: 54px;
    height: 54px;
}

.tools .selected {
    background-color: #0a96da;
    box-shadow: 0 0 0 5px #0a96da;
}

.menu {
    display: flex;
    align-items: center;
    gap: 6px;
    height: 20px;
    padding: 0 5px;
}

/* workspace */

.workspace {
    display: flex;
    flex: 1;
    flex-direction: column;
    justify-content: space-between;
    min-height: 0;
    padding: 7px 0 8px;
    position: relative;
}

.scene {
    position: absolute;
    top: 0;
    left: 0;
    width: 100%;
    height: 100%;
}

.model path,
.model ellipse {
    stroke: #262722;
    stroke-width: 1.3;
    stroke-linejoin: round;
}

.gridLabel {
    fill: #555;
    font-family: "DejaVu Sans", sans-serif;
    font-size: 13px;
}

.gridLabel.side {
    font-style: italic;
}

.viewCube {
    position: absolute;
    top: 8px;
    right: 0;
    width: 200px;
    height: 190px;
}

.axisZ,
.axisX {
    fill: #8080f0;
    font-size: 24px;
}

.axisX {
    fill: #f58080;
}

.face,
.faceSide,
.faceTop {
    fill: #94979b;
    font-size: 17px;
    font-weight: 700;
}

.faceSide {
    font-size: 10px;
}

.faceTop {
    font-size: 10px;
}

.panelHead {
    display: flex;
    align-items: center;
    width: 505px;
    height: 41px;
    padding: 0 18px 0 8px;
    border: 1px solid #ccc;
    border-width: 1px 2px 2px 1px;
    background-color: #f1f1f1;
}

.panelHead h2 {
    flex: 1;
    color: #666;
    font-size: 19px;
    font-weight: 400;
}

.rewind {
    width: 17px;
    height: 10px;
    margin-right: 16px;
}

.dot svg {
    width: 14px;
    height: 14px;
}

.browser {
    position: relative;
    width: 505px;
}

.tree {
    display: flex;
    flex-direction: column;
    justify-content: space-between;
    height: 438px;
    margin-top: 9px;
}

.tree li {
    display: flex;
    align-items: center;
    gap: 18px;
    padding-left: 61px;
}

.tree .root {
    padding-left: 31px;
}

.twist {
    width: 12px;
    height: 16px;
    background: #222;
    clip-path: polygon(0 0, 35% 0, 100% 50%, 35% 100%, 0 100%);
    position: relative;
}

.twist::after {
    content: "";
    position: absolute;
    inset: 1px 2px 1px 1px;
    background: #fff;
    clip-path: polygon(0 0, 35% 0, 100% 50%, 35% 100%, 0 100%);
}

.twist.open {
    height: 12px;
    background: none;
    clip-path: none;
}

.twist.open::after {
    display: none;
}

.twist svg {
    width: 12px;
    height: 12px;
}

.row {
    display: flex;
    align-items: center;
    height: 34px;
    padding: 0 18px 0 5px;
    background-color: #f1f1f1;
    white-space: nowrap;
}

.root .row {
    padding-right: 12px;
}

.eye {
    width: 26px;
    height: 18px;
    margin-right: 16px;
}

.root .eye {
    margin-right: 11px;
}

.type {
    width: 27px;
    height: 24px;
    margin-right: 24px;
}

.type.folder {
    height: 22px;
}

.type.gear {
    width: 22px;
    color: #888;
    margin-right: 22px;
}

.title {
    display: flex;
    align-items: center;
    height: 28px;
    padding: 0 20px 0 5px;
    background-color: #999;
    color: #fff;
    font-weight: 700;
}

.row input {
    appearance: none;
    width: 22px;
    height: 22px;
    margin-left: 7px;
    border: 2px solid #777c8a;
    border-radius: 50%;
    background: radial-gradient(circle, #333 4px, #e4e8f4 5px);
}

/* bottom row over the canvas */

.bottomBar {
    display: grid;
    grid-template-columns: 1fr auto 1fr;
    position: relative;
}

.comments {
    padding-left: 41px;
    border-top: 0;
}

.navBar {
    display: flex;
    align-items: center;
    gap: 18px;
    height: 40px;
    padding: 0 7px;
    background-color: #f1f1f1;
}

.navBar button {
    display: flex;
    align-items: center;
    gap: 8px;
}

.navBar .drop {
    margin-right: -7px;
}

.navBar .near {
    gap: 4px;
}

.navBar .near:last-child {
    margin-right: 0;
}

.navBar svg {
    width: 26px;
    height: 26px;
}

.assistant {
    justify-self: end;
    align-self: end;
    margin-right: 12px;
}

.assistant svg {
    width: 28px;
    height: 28px;
}

/* timeline */

.timeline {
    flex: none;
    border-top: 4px solid #c9c9c9;
    background-color: #f1f1f1;
}

.scrollTrack {
    height: 13px;
}

.scrollThumb {
    width: 58.75%;
    height: 13px;
    border-radius: 6px;
    background-color: #c9c9c9;
}

.timelineBody {
    display: flex;
    height: 64px;
}

.playback {
    display: flex;
    align-items: flex-start;
    gap: 16px;
    width: 233px;
    padding: 20px 0 0 8px;
}

.playback svg {
    width: 26px;
    height: 26px;
}

.steps {
    display: flex;
    flex: 1;
    padding-top: 13px;
}

.steps li {
    display: flex;
    flex: 1;
    flex-direction: column;
    align-items: center;
}

.steps svg {
    width: 26px;
    height: 27px;
}

/* tick under each feature and the rail joining them */
.steps li::after {
    content: "";
    align-self: stretch;
    height: 12px;
    margin-top: 5px;
    border-bottom: 3px solid #ccc;
    background: linear-gradient(#ccc, #ccc) center / 3px 100% no-repeat;
}

.steps li:first-child::after {
    margin-left: 19px;
    background-position: left;
}

.steps li:last-child::after {
    margin-right: 10px;
    background-position: 19px 0;
}

/* dashes where the rail runs out */
.steps::after {
    content: "";
    width: 15px;
    height: 3px;
    margin: 41px -9px 0 -6px;
    background: repeating-linear-gradient(90deg, #ccc 0 6px, transparent 6px 10px);
}

.settings {
    width: 85px;
    padding: 0 15px 0 44px;
}

.settings svg {
    width: 26px;
    height: 26px;
    color: #777;
}
```

FILE: main.js
```js
// feature history: s = sketch, e = extrude, m = move
var features = 'sesesesesesese' + 'eeesessesee' + 'sesesesesesesesesesese' + 'eesesem';
var icons = { s: 'sketchStep', e: 'extrudeStep', m: 'move' };

function drawTimeline() {
    var html = '';
    for (var i = 0; i < features.length; i++) {
        html += '<li><svg><use href="#' + icons[features[i]] + '"/></svg></li>';
    }
    document.getElementById('steps').innerHTML = html;
}

// perspective of the ground grid, a and b run from 0 to 1
function project(a, b) {
    var w = 1 - 0.1686 * a + 0.3193 * b;
    return [
        ((761.5 * a + 918.8 * b + 506) / w).toFixed(1),
        ((6.4 * a - 8.2 * b + 1057) / w).toFixed(1)
    ];
}

function line(a1, b1, a2, b2, color, width) {
    return '<path d="M' + project(a1, b1) + 'L' + project(a2, b2) + '" stroke="' + color + '" stroke-width="' + width + '"/>';
}

function drawFloor() {
    var out = '<path fill="url(#floorFill)" d="M' + project(0, 0) + 'L' + project(1, 0) + 'L' + project(1, 1) + 'L' + project(0, 1) + 'z"/>';
    var i, p;
    for (i = 0; i <= 200; i++) {
        out += line(i / 200, 0, i / 200, 1, 'rgba(0,0,0,.03)', 1);
        out += line(0, i / 200, 1, i / 200, 'rgba(0,0,0,.03)', 1);
    }
    for (i = 1; i < 20; i++) {
        out += line(i / 20, 0, i / 20, 1, '#d4d4d4', 1);
        out += line(0, i / 20, 1, i / 20, '#d4d4d4', 1);
    }
    out += line(0, 0.7, 1, 0.7, '#f4a9a9', 1.5);
    out += line(0.5, 0, 0.5, 0.7, '#b9f0be', 1.5);
    out += line(0, 0, 1, 0, '#888', 1.2) + line(1, 0, 1, 1, '#888', 1.2);
    out += line(0, 1, 1, 1, '#888', 1.2) + line(0, 0, 0, 1, '#888', 1.2);

    // front edge, read from the left
    for (i = -10; i <= 10; i++) {
        p = project((i + 10) / 20, 0);
        out += '<text class="gridLabel" transform="translate(' + p + ') rotate(-70)" x="0" y="5">' + Math.abs(i) + '</text>';
    }
    // right edge
    for (i = -13; i <= 6; i++) {
        p = project(1, (i + 14) / 20);
        out += '<text class="gridLabel side" x="' + (+p[0] + 3 + (i < -9 ? 3 : 0)) + '" y="' + (+p[1] + 7) + '">' + Math.abs(i) + '</text>';
    }
    document.getElementById('floor').innerHTML = out;
}

drawTimeline();
drawFloor();
```
